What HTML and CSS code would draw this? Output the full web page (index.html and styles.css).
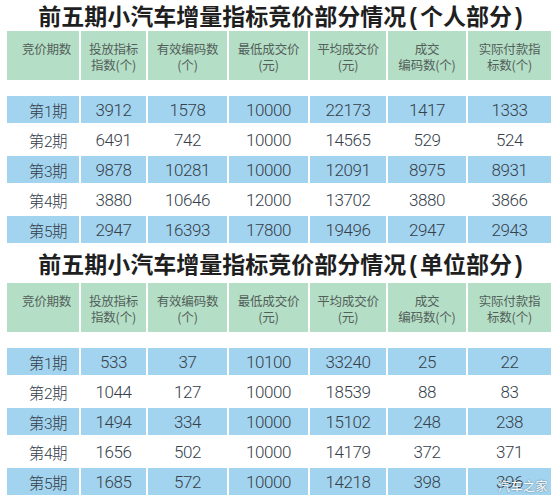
FILE: index.html
```html
<!DOCTYPE html>
<html lang="zh-CN">
<head>
<meta charset="utf-8">
<title>前五期小汽车增量指标竞价部分情况</title>
<link rel="stylesheet" href="styles.css">
</head>
<body>
<div class="page">
  <h1 class="title title-first">前五期小汽车增量指标竞价部分情况<span class="paren">(</span>个人部分<span class="paren">)</span></h1>
  <div class="table">
    <div class="row head">
      <div class="cell first"><span>竞价期数</span></div>
      <div class="cell"><span>投放指标<br>指数(个)</span></div>
      <div class="cell"><span>有效编码数<br>(个)</span></div>
      <div class="cell"><span>最低成交价<br>(元)</span></div>
      <div class="cell"><span>平均成交价<br>(元)</span></div>
      <div class="cell"><span>成交<br>编码数(个)</span></div>
      <div class="cell"><span>实际付款指<br>标数(个)</span></div>
    </div>
    <div class="spacer"></div>
    <div class="row blue">
      <div class="cell first">第1期</div><div class="cell">3912</div><div class="cell">1578</div><div class="cell">10000</div><div class="cell">22173</div><div class="cell">1417</div><div class="cell">1333</div>
    </div>
    <div class="row plain">
      <div class="cell first">第2期</div><div class="cell">6491</div><div class="cell">742</div><div class="cell">10000</div><div class="cell">14565</div><div class="cell">529</div><div class="cell">524</div>
    </div>
    <div class="row blue">
      <div class="cell first">第3期</div><div class="cell">9878</div><div class="cell">10281</div><div class="cell">10000</div><div class="cell">12091</div><div class="cell">8975</div><div class="cell">8931</div>
    </div>
    <div class="row plain">
      <div class="cell first">第4期</div><div class="cell">3880</div><div class="cell">10646</div><div class="cell">12000</div><div class="cell">13702</div><div class="cell">3880</div><div class="cell">3866</div>
    </div>
    <div class="row blue">
      <div class="cell first">第5期</div><div class="cell">2947</div><div class="cell">16393</div><div class="cell">17800</div><div class="cell">19496</div><div class="cell">2947</div><div class="cell">2943</div>
    </div>
  </div>

  <h1 class="title title-second">前五期小汽车增量指标竞价部分情况<span class="paren">(</span>单位部分<span class="paren">)</span></h1>
  <div class="table">
    <div class="row head">
      <div class="cell first"><span>竞价期数</span></div>
      <div class="cell"><span>投放指标<br>指数(个)</span></div>
      <div class="cell"><span>有效编码数<br>(个)</span></div>
      <div class="cell"><span>最低成交价<br>(元)</span></div>
      <div class="cell"><span>平均成交价<br>(元)</span></div>
      <div class="cell"><span>成交<br>编码数(个)</span></div>
      <div class="cell"><span>实际付款指<br>标数(个)</span></div>
    </div>
    <div class="spacer"></div>
    <div class="row blue">
      <div class="cell first">第1期</div><div class="cell">533</div><div class="cell">37</div><div class="cell">10100</div><div class="cell">33240</div><div class="cell">25</div><div class="cell">22</div>
    </div>
    <div class="row plain">
      <div class="cell first">第2期</div><div class="cell">1044</div><div class="cell">127</div><div class="cell">10000</div><div class="cell">18539</div><div class="cell">88</div><div class="cell">83</div>
    </div>
    <div class="row blue">
      <div class="cell first">第3期</div><div class="cell">1494</div><div class="cell">334</div><div class="cell">10000</div><div class="cell">15102</div><div class="cell">248</div><div class="cell">238</div>
    </div>
    <div class="row plain">
      <div class="cell first">第4期</div><div class="cell">1656</div><div class="cell">502</div><div class="cell">10000</div><div class="cell">14179</div><div class="cell">372</div><div class="cell">371</div>
    </div>
    <div class="row blue">
      <div class="cell first">第5期</div><div class="cell">1685</div><div class="cell">572</div><div class="cell">10000</div><div class="cell">14218</div><div class="cell">398</div><div class="cell">396</div>
    </div>
  </div>
  <div class="watermark">汽车之家</div>
</div>
</body>
</html>
```

FILE: styles.css
```css
html, body {
  margin: 0;
  padding: 0;
  background: #ffffff;
}

.page {
  position: relative;
  width: 554px;
  height: 497px;
  padding: 0 3px 0 7px;
  box-sizing: border-box;
  font-family: "Noto Sans CJK SC", "Noto Sans", sans-serif;
  overflow: hidden;
}

.title {
  margin: 0;
  padding-left: 6px;
  text-align: center;
  font-family: "Noto Sans CJK SC", sans-serif;
  font-weight: bold;
  font-size: 23px;
  color: #1f1f1f;
  white-space: nowrap;
}

.title-first {
  height: 31px;
  line-height: 31px;
}

.title-second {
  height: 40px;
  line-height: 40px;
}

.paren {
  font-family: "Liberation Sans", sans-serif;
  margin: 0 3px;
}

.table {
  display: flex;
  flex-direction: column;
}

.row {
  display: grid;
  grid-template-columns: 72px 65px 79px 79px 76px 78px 83px;
  column-gap: 2px;
}

.head {
  height: 49px;
}

.head .cell {
  background: #b5dec6;
  color: #52605a;
  font-size: 12.5px;
  line-height: 15.5px;
  letter-spacing: -0.2px;
  align-items: flex-start;
  padding-top: 10px;
  box-sizing: border-box;
}

.head .cell span {
  display: block;
  text-align: center;
}

.head .first {
  padding-left: 7px;
}

.spacer {
  height: 16px;
}

.cell {
  display: flex;
  align-items: center;
  justify-content: center;
  white-space: nowrap;
}

.blue .cell,
.plain .cell {
  font-family: "Roboto", "Noto Sans CJK SC", sans-serif;
  font-weight: 300;
  font-size: 17px;
  letter-spacing: -0.4px;
  color: #35404a;
}

.blue .first,
.plain .first {
  font-size: 15.5px;
  padding-left: 10px;
}

.blue {
  height: 27px;
}

.blue .cell {
  background: #a3d4ef;
}

.plain {
  height: 33px;
}

.watermark {
  position: absolute;
  right: 6px;
  bottom: 3px;
  font-family: "Noto Sans CJK SC", sans-serif;
  font-size: 12px;
  color: #ffffff;
  text-shadow: 0 0 2px rgba(0, 0, 0, 0.55);
  letter-spacing: 0.5px;
}
```
